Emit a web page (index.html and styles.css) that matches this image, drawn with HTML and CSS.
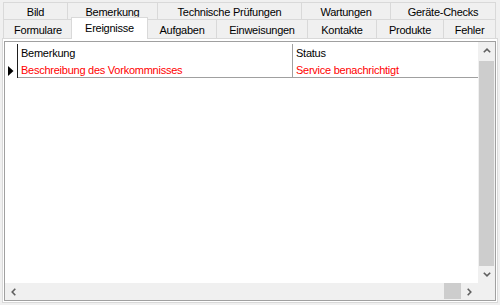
FILE: index.html
```html
<!DOCTYPE html>
<html>
<head>
	<title>Ereignisse</title>
	<link rel="stylesheet" href="styles.css">
</head>
<body>
	<div class="tabs">
		<div class="tab-row row-back">
			<div class="tab">Bild</div>
			<div class="tab">Bemerkung</div>
			<div class="tab">Technische Prüfungen</div>
			<div class="tab">Wartungen</div>
			<div class="tab">Geräte-Checks</div>
		</div>
		<div class="tab-row row-front">
			<div class="tab">Formulare</div>
			<div class="tab active">Ereignisse</div>
			<div class="tab">Aufgaben</div>
			<div class="tab">Einweisungen</div>
			<div class="tab">Kontakte</div>
			<div class="tab">Produkte</div>
			<div class="tab">Fehler</div>
		</div>
	</div>

	<div class="page">
		<div class="grid">
			<div class="cells">
				<div class="row head">
					<div class="rh"></div>
					<div class="c1">Bemerkung</div>
					<div class="c2">Status</div>
				</div>
				<div class="row data">
					<div class="rh">
						<svg width="6" height="10" viewBox="0 0 6 10"><path d="M0 0 L5.5 5 L0 10 Z" fill="#000"/></svg>
					</div>
					<div class="c1">Beschreibung des Vorkommnisses</div>
					<div class="c2">Service benachrichtigt</div>
				</div>
			</div>

			<div class="vscroll">
				<div class="sbtn">
					<svg width="8" height="5" viewBox="0 0 8 5"><path d="M0.8 4.3 L4 1.2 L7.2 4.3" fill="none" stroke="#606060" stroke-width="1.6"/></svg>
				</div>
				<div class="vthumb"></div>
				<div class="sbtn">
					<svg width="8" height="5" viewBox="0 0 8 5"><path d="M0.8 0.7 L4 3.8 L7.2 0.7" fill="none" stroke="#606060" stroke-width="1.6"/></svg>
				</div>
			</div>

			<div class="hscroll">
				<div class="sbtn">
					<svg width="5" height="8" viewBox="0 0 5 8"><path d="M4.3 0.8 L1.2 4 L4.3 7.2" fill="none" stroke="#606060" stroke-width="1.6"/></svg>
				</div>
				<div class="htrack"></div>
				<div class="hthumb"></div>
				<div class="sbtn">
					<svg width="5" height="8" viewBox="0 0 5 8"><path d="M0.7 0.8 L3.8 4 L0.7 7.2" fill="none" stroke="#606060" stroke-width="1.6"/></svg>
				</div>
			</div>

			<div class="corner"></div>
		</div>
	</div>
</body>
</html>
```

FILE: styles.css
```css
body {
	margin: 0;
	height: 305px;
	display: flex;
	flex-direction: column;
	background: #f0f0f0;
	font-family: "Liberation Sans", Arial, sans-serif;
	font-size: 11px;
	letter-spacing: -0.25px;
	color: #000;
}

.tabs {
	padding: 2px 0 0 3px;
}

.tab-row {
	display: grid;
	width: 493px;
}

.row-back {
	grid-template-columns: 64px 90px 144px 89px 106px;
	height: 17px;
}

.row-front {
	grid-template-columns: 69px 75px 69px 91px 69px 67px 53px;
	height: 19px;
}

.tab {
	display: flex;
	align-items: center;
	justify-content: center;
	padding-top: 2px;
	border: 1px solid #d9d9d9;
	border-right: none;
	border-bottom: none;
	background: #f0f0f0;
	white-space: nowrap;
}

.tab:last-child {
	border-right: 1px solid #d9d9d9;
}

.tab.active {
	margin: -2px -1px -1px -1px;
	padding-top: 0;
	padding-bottom: 2px;
	border-right: 1px solid #d9d9d9;
	background: #fff;
	z-index: 1;
}

.page {
	flex: 1;
	display: flex;
	margin: 0 2px 2px 2px;
	padding: 2px 1px 1px 1px;
	border: 1px solid #d9d9d9;
	background: #fff;
}

.grid {
	flex: 1;
	display: grid;
	grid-template-columns: 1fr 17px;
	grid-template-rows: 1fr 17px;
	border: 1px solid #a0a0a0;
}

.cells {
	padding-top: 2px;
	background: #fff;
}

.row {
	display: flex;
	height: 17px;
	line-height: 19px;
}

.rh {
	width: 9px;
	display: flex;
	align-items: center;
	padding: 2px 0 0 3px;
	border-right: 1px solid #1e1e1e;
}

.c1 {
	width: 271px;
	padding-left: 3px;
	border-right: 1px solid #a0a0a0;
	white-space: nowrap;
}

.c2 {
	flex: 1;
	padding-left: 3px;
	white-space: nowrap;
}

.data {
	color: #ff0000;
}

.data .c1,
.data .c2 {
	border-bottom: 1px solid #a0a0a0;
}

.vscroll {
	display: flex;
	flex-direction: column;
	background: #f0f0f0;
}

.sbtn {
	width: 17px;
	height: 17px;
	display: flex;
	align-items: center;
	justify-content: center;
	flex: none;
}

.vthumb {
	flex: 1;
	margin: 2px 1px 0 1px;
	background: #cdcdcd;
}

.hscroll {
	display: flex;
	background: #f0f0f0;
}

.htrack {
	flex: 1;
}

.hthumb {
	width: 17px;
	margin-bottom: 1px;
	background: #cdcdcd;
}

.corner {
	background: #f0f0f0;
}
```
